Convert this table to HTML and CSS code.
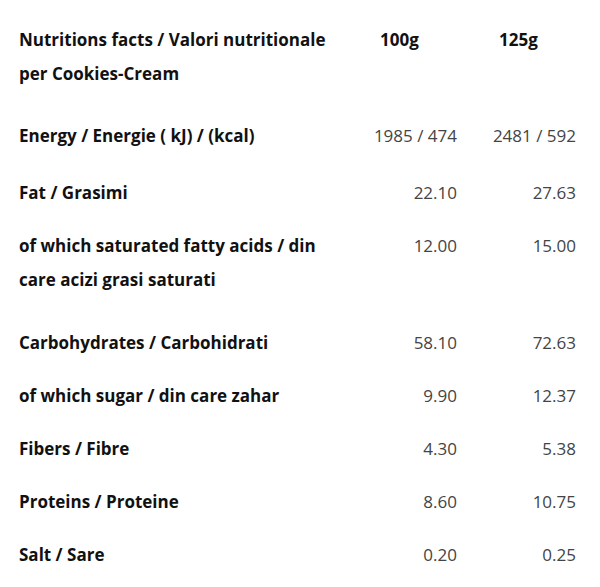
FILE: index.html
```html
<!DOCTYPE html>
<html lang="en">
<head>
<meta charset="utf-8">
<title>Nutrition facts</title>
<link rel="stylesheet" href="styles.css">
</head>
<body>
<div class="page">
<table class="nutri">
  <colgroup>
    <col class="c-label">
    <col class="c-val">
    <col class="c-val">
  </colgroup>
  <thead>
    <tr class="row two">
      <th class="label">Nutritions facts / Valori nutritionale per Cookies-Cream</th>
      <th class="head">100g</th>
      <th class="head">125g</th>
    </tr>
  </thead>
  <tbody>
    <tr class="row energy"><td class="label">Energy / Energie ( kJ) / (kcal)</td><td class="val">1985 / 474</td><td class="val">2481 / 592</td></tr>
    <tr class="row"><td class="label">Fat / Grasimi</td><td class="val">22.10</td><td class="val">27.63</td></tr>
    <tr class="row two"><td class="label">of which saturated fatty acids / din care acizi grasi saturati</td><td class="val">12.00</td><td class="val">15.00</td></tr>
    <tr class="row"><td class="label">Carbohydrates / Carbohidrati</td><td class="val">58.10</td><td class="val">72.63</td></tr>
    <tr class="row"><td class="label">of which sugar / din care zahar</td><td class="val">9.90</td><td class="val">12.37</td></tr>
    <tr class="row"><td class="label">Fibers / Fibre</td><td class="val">4.30</td><td class="val">5.38</td></tr>
    <tr class="row"><td class="label">Proteins / Proteine</td><td class="val">8.60</td><td class="val">10.75</td></tr>
    <tr class="row"><td class="label">Salt / Sare</td><td class="val">0.20</td><td class="val">0.25</td></tr>
  </tbody>
</table>
</div>
</body>
</html>
```
FILE: styles.css
```css
html, body {
  margin: 0;
  padding: 0;
  background: #ffffff;
}
body {
  font-family: "Open Sans", "Liberation Sans", sans-serif;
  font-size: 17px;
  line-height: 34px;
  color: #111111;
}
.page {
  padding: 13px 24px 0 19px;
}
.nutri {
  width: 557px;
  border-collapse: collapse;
  table-layout: fixed;
}
.c-label { width: 319px; }
.c-val { width: 119px; }
.nutri th, .nutri td {
  padding: 9.5px 0;
  vertical-align: top;
}
.label {
  font-weight: 700;
  text-align: left;
  color: #111111;
  padding-right: 8px !important;
}
.head {
  font-weight: 700;
  text-align: left;
  padding-left: 42px !important;
  color: #111111;
}
.val {
  text-align: right;
  font-weight: 400;
  color: #444444;
}
.row.two th, .row.two td {
  padding-bottom: 19px;
}
.row.energy td {
  padding-bottom: 13.5px;
}
```
